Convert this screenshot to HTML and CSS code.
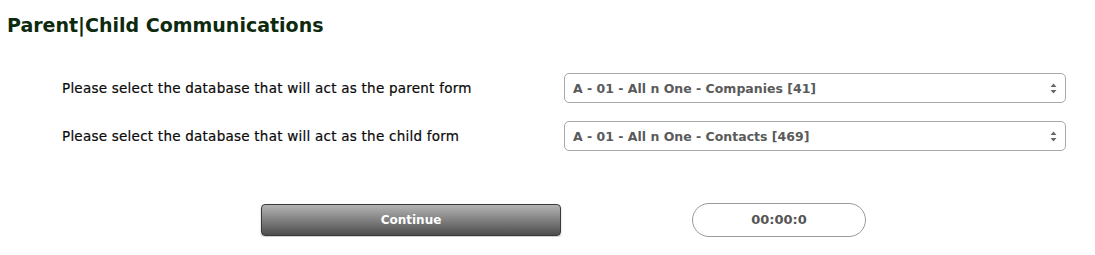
FILE: index.html
```
<!DOCTYPE html>
<html>
<head>
    <meta charset="utf-8">
    <title>Parent|Child Communications</title>
    <link rel="stylesheet" href="styles.css">
</head>
<body>
<div class="page">
    <h2 class="title">Parent|Child Communications</h2>
    <div class="form">
        <div class="row">
            <label class="lbl">Please select the database that will act as the parent form</label>
            <div class="sel-wrap">
                <select class="sel">
                    <option>A - 01 - All n One - Companies [41]</option>
                </select>
                <span class="arrows">
                    <svg width="7" height="11" viewBox="0 0 7 11"><path d="M3.5 0.5 L6.5 4 L0.5 4 Z M0.5 7 L6.5 7 L3.5 10.5 Z" fill="#666"/></svg>
                </span>
            </div>
        </div>
        <div class="row">
            <label class="lbl">Please select the database that will act as the child form</label>
            <div class="sel-wrap">
                <select class="sel">
                    <option>A - 01 - All n One - Contacts [469]</option>
                </select>
                <span class="arrows">
                    <svg width="7" height="11" viewBox="0 0 7 11"><path d="M3.5 0.5 L6.5 4 L0.5 4 Z M0.5 7 L6.5 7 L3.5 10.5 Z" fill="#666"/></svg>
                </span>
            </div>
        </div>
    </div>
    <div class="actions">
        <a href="#" class="btn">Continue</a>
        <div class="timer">00:00:0</div>
    </div>
</div>
</body>
</html>
```
FILE: styles.css
```
body{
    margin: 0;
    background: #fff;
    font-family: "DejaVu Sans", "Open Sans", sans-serif;
}
a{
    text-decoration: none;
}
.page{
    padding-top: 12px;
}
.title{
    margin: 0;
    padding-left: 7px;
    font-size: 19px;
    font-weight: 600;
    color: #0d2a0e;
    line-height: 26px;
}
.form{
    padding: 35px 29px 0 62px;
}
.row{
    display: flex;
    align-items: center;
    margin-bottom: 18px;
}
.lbl{
    flex: 1;
    font-size: 13.5px;
    color: #0a0a0a;
    letter-spacing: 0.24px;
    -webkit-text-stroke: 0.2px #0a0a0a;
}
.sel-wrap{
    position: relative;
    width: 502px;
}
.sel{
    display: block;
    width: 100%;
    height: 30px;
    padding: 0 24px 0 8px;
    -webkit-appearance: none;
    appearance: none;
    border: 1px solid #a9a9a9;
    border-radius: 5px;
    background: #fff;
    font-family: inherit;
    font-size: 12.5px;
    font-weight: bold;
    color: #5a5a5a;
    outline: none;
}
.arrows{
    position: absolute;
    right: 9px;
    top: 10px;
    line-height: 0;
}
.actions{
    display: flex;
    align-items: center;
    padding: 34px 0 0 261px;
}
.btn{
    display: block;
    width: 300px;
    height: 32px;
    box-sizing: border-box;
    line-height: 30px;
    text-align: center;
    border: 1px solid #3a3a3a;
    border-radius: 4px;
    background: linear-gradient(#b4b4b4, #4d4d4d);
    box-shadow: 0 1px 2px rgba(0,0,0,0.25);
    color: #fff;
    font-size: 12px;
    font-weight: bold;
}
.timer{
    margin-left: 131px;
    width: 174px;
    height: 34px;
    box-sizing: border-box;
    line-height: 32px;
    text-align: center;
    border: 1px solid #9a9a9a;
    border-radius: 17px;
    color: #555;
    font-size: 13px;
    font-weight: bold;
}
```
